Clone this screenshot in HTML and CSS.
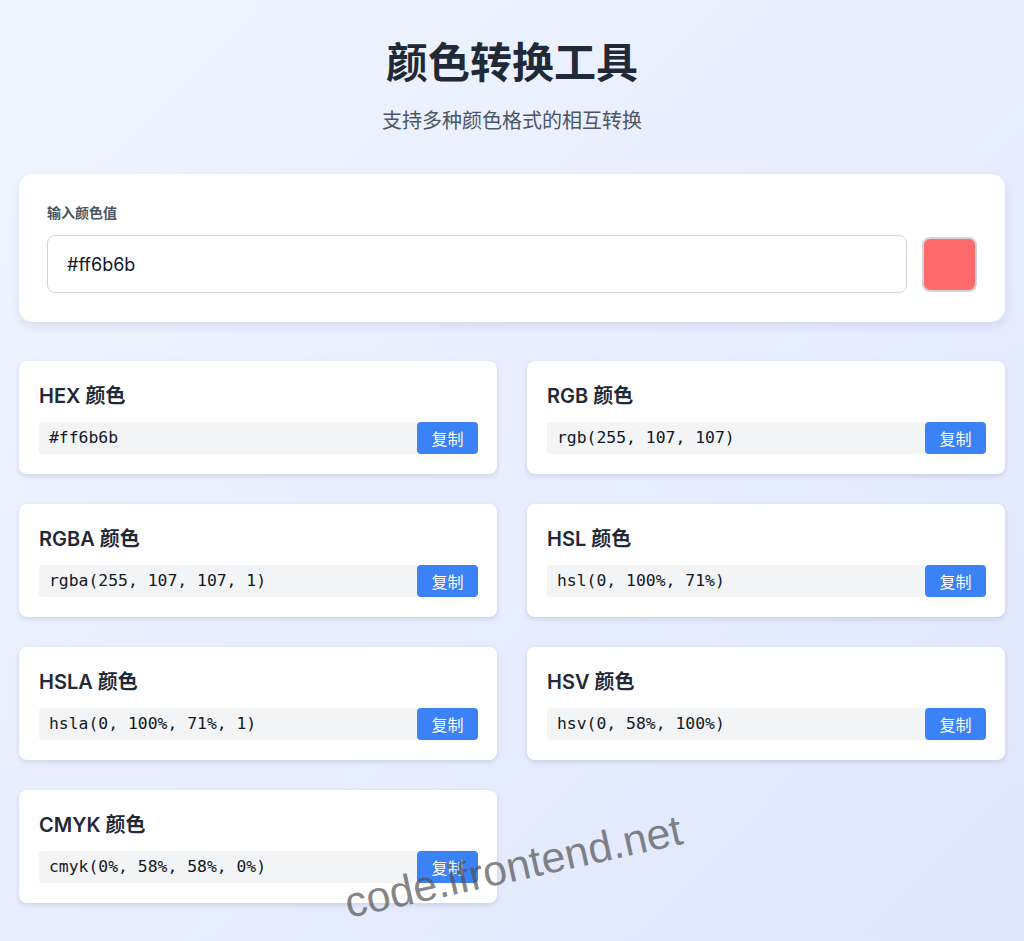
FILE: index.html
```html
<!DOCTYPE html>
<html lang="zh-CN">
<head>
  <meta charset="UTF-8">
  <title>颜色转换工具</title>
  <link rel="stylesheet" href="styles.css">
</head>
<body>

  <div class="wrap">
    <h1>颜色转换工具</h1>
    <p class="sub">支持多种颜色格式的相互转换</p>

    <div class="input-card">
      <label class="label" for="colorInput">输入颜色值</label>
      <div class="input-row">
        <input class="color-text" id="colorInput" type="text" value="#ff6b6b">
        <div class="swatch"></div>
      </div>
    </div>

    <div class="grid">
      <div class="card">
        <h3>HEX 颜色</h3>
        <div class="row"><code class="val">#ff6b6b</code><button class="copy">复制</button></div>
      </div>
      <div class="card">
        <h3>RGB 颜色</h3>
        <div class="row"><code class="val">rgb(255, 107, 107)</code><button class="copy">复制</button></div>
      </div>
      <div class="card">
        <h3>RGBA 颜色</h3>
        <div class="row"><code class="val">rgba(255, 107, 107, 1)</code><button class="copy">复制</button></div>
      </div>
      <div class="card">
        <h3>HSL 颜色</h3>
        <div class="row"><code class="val">hsl(0, 100%, 71%)</code><button class="copy">复制</button></div>
      </div>
      <div class="card">
        <h3>HSLA 颜色</h3>
        <div class="row"><code class="val">hsla(0, 100%, 71%, 1)</code><button class="copy">复制</button></div>
      </div>
      <div class="card">
        <h3>HSV 颜色</h3>
        <div class="row"><code class="val">hsv(0, 58%, 100%)</code><button class="copy">复制</button></div>
      </div>
      <div class="card">
        <h3>CMYK 颜色</h3>
        <div class="row"><code class="val">cmyk(0%, 58%, 58%, 0%)</code><button class="copy">复制</button></div>
      </div>
    </div>
  </div>

  <div class="watermark">code.ifrontend.net</div>

</body>
</html>
```

FILE: styles.css
```css
body {
  margin: 0;
  min-height: 941px;
  background: linear-gradient(135deg, #f0f5ff, #e0e7fd);
  font-family: Inter, "Noto Sans CJK SC", sans-serif;
  color: #1f2937;
  position: relative;
  overflow: hidden;
}

.wrap {
  max-width: 986px;
  margin: 0 auto;
  padding-top: 33px;
}

h1 {
  margin: 0;
  text-align: center;
  font-size: 42px;
  line-height: 60px;
  font-weight: 700;
  color: #1f2937;
}

.sub {
  margin: 14px 0 0;
  text-align: center;
  font-size: 20px;
  line-height: 28px;
  color: #4b5563;
}

.input-card {
  margin-top: 39px;
  background: #fff;
  border-radius: 14px;
  padding: 29px 28px 29px 28px;
  box-shadow: 0 4px 10px rgba(30, 41, 90, 0.1);
}

.label {
  display: block;
  font-size: 14px;
  line-height: 20px;
  font-weight: 600;
  color: #4b5563;
  margin-bottom: 12px;
}

.input-row {
  display: flex;
  align-items: center;
  gap: 15px;
}

.color-text {
  flex: 1;
  height: 58px;
  box-sizing: border-box;
  border: 1px solid #d1d5db;
  border-radius: 8px;
  padding: 0 19px;
  font-family: Inter, "Noto Sans CJK SC", sans-serif;
  font-size: 18px;
  color: #111827;
  outline: none;
}

.swatch {
  width: 55px;
  height: 55px;
  box-sizing: border-box;
  border: 2px solid #d1d5db;
  border-radius: 8px;
  background: #ff6b6b;
}

.grid {
  margin-top: 39px;
  display: grid;
  grid-template-columns: 1fr 1fr;
  gap: 30px;
}

.card {
  background: #fff;
  border-radius: 8px;
  padding: 21px 19px 20px 20px;
  box-shadow: 0 2px 5px rgba(30, 41, 90, 0.14);
}

.card h3 {
  margin: 0 0 12px;
  font-size: 20px;
  line-height: 28px;
  font-weight: 600;
  color: #1f2937;
}

.row {
  display: flex;
  height: 32px;
}

.val {
  flex: 1;
  background: #f3f4f6;
  border-radius: 4px 0 0 4px;
  padding: 0 10px;
  font-family: "DejaVu Sans Mono", monospace;
  font-size: 16.4px;
  line-height: 32px;
  color: #111827;
}

.copy {
  width: 61px;
  border: none;
  border-radius: 4px;
  background: #3b82f6;
  color: #fff;
  font-family: Inter, "Noto Sans CJK SC", sans-serif;
  font-size: 16px;
  cursor: pointer;
}

.watermark {
  position: absolute;
  left: 340px;
  top: 880px;
  font-family: "Liberation Sans", sans-serif;
  font-size: 43px;
  color: rgba(80, 80, 80, 0.7);
  transform: rotate(-12.5deg);
  transform-origin: left top;
  pointer-events: none;
  white-space: nowrap;
}
```
